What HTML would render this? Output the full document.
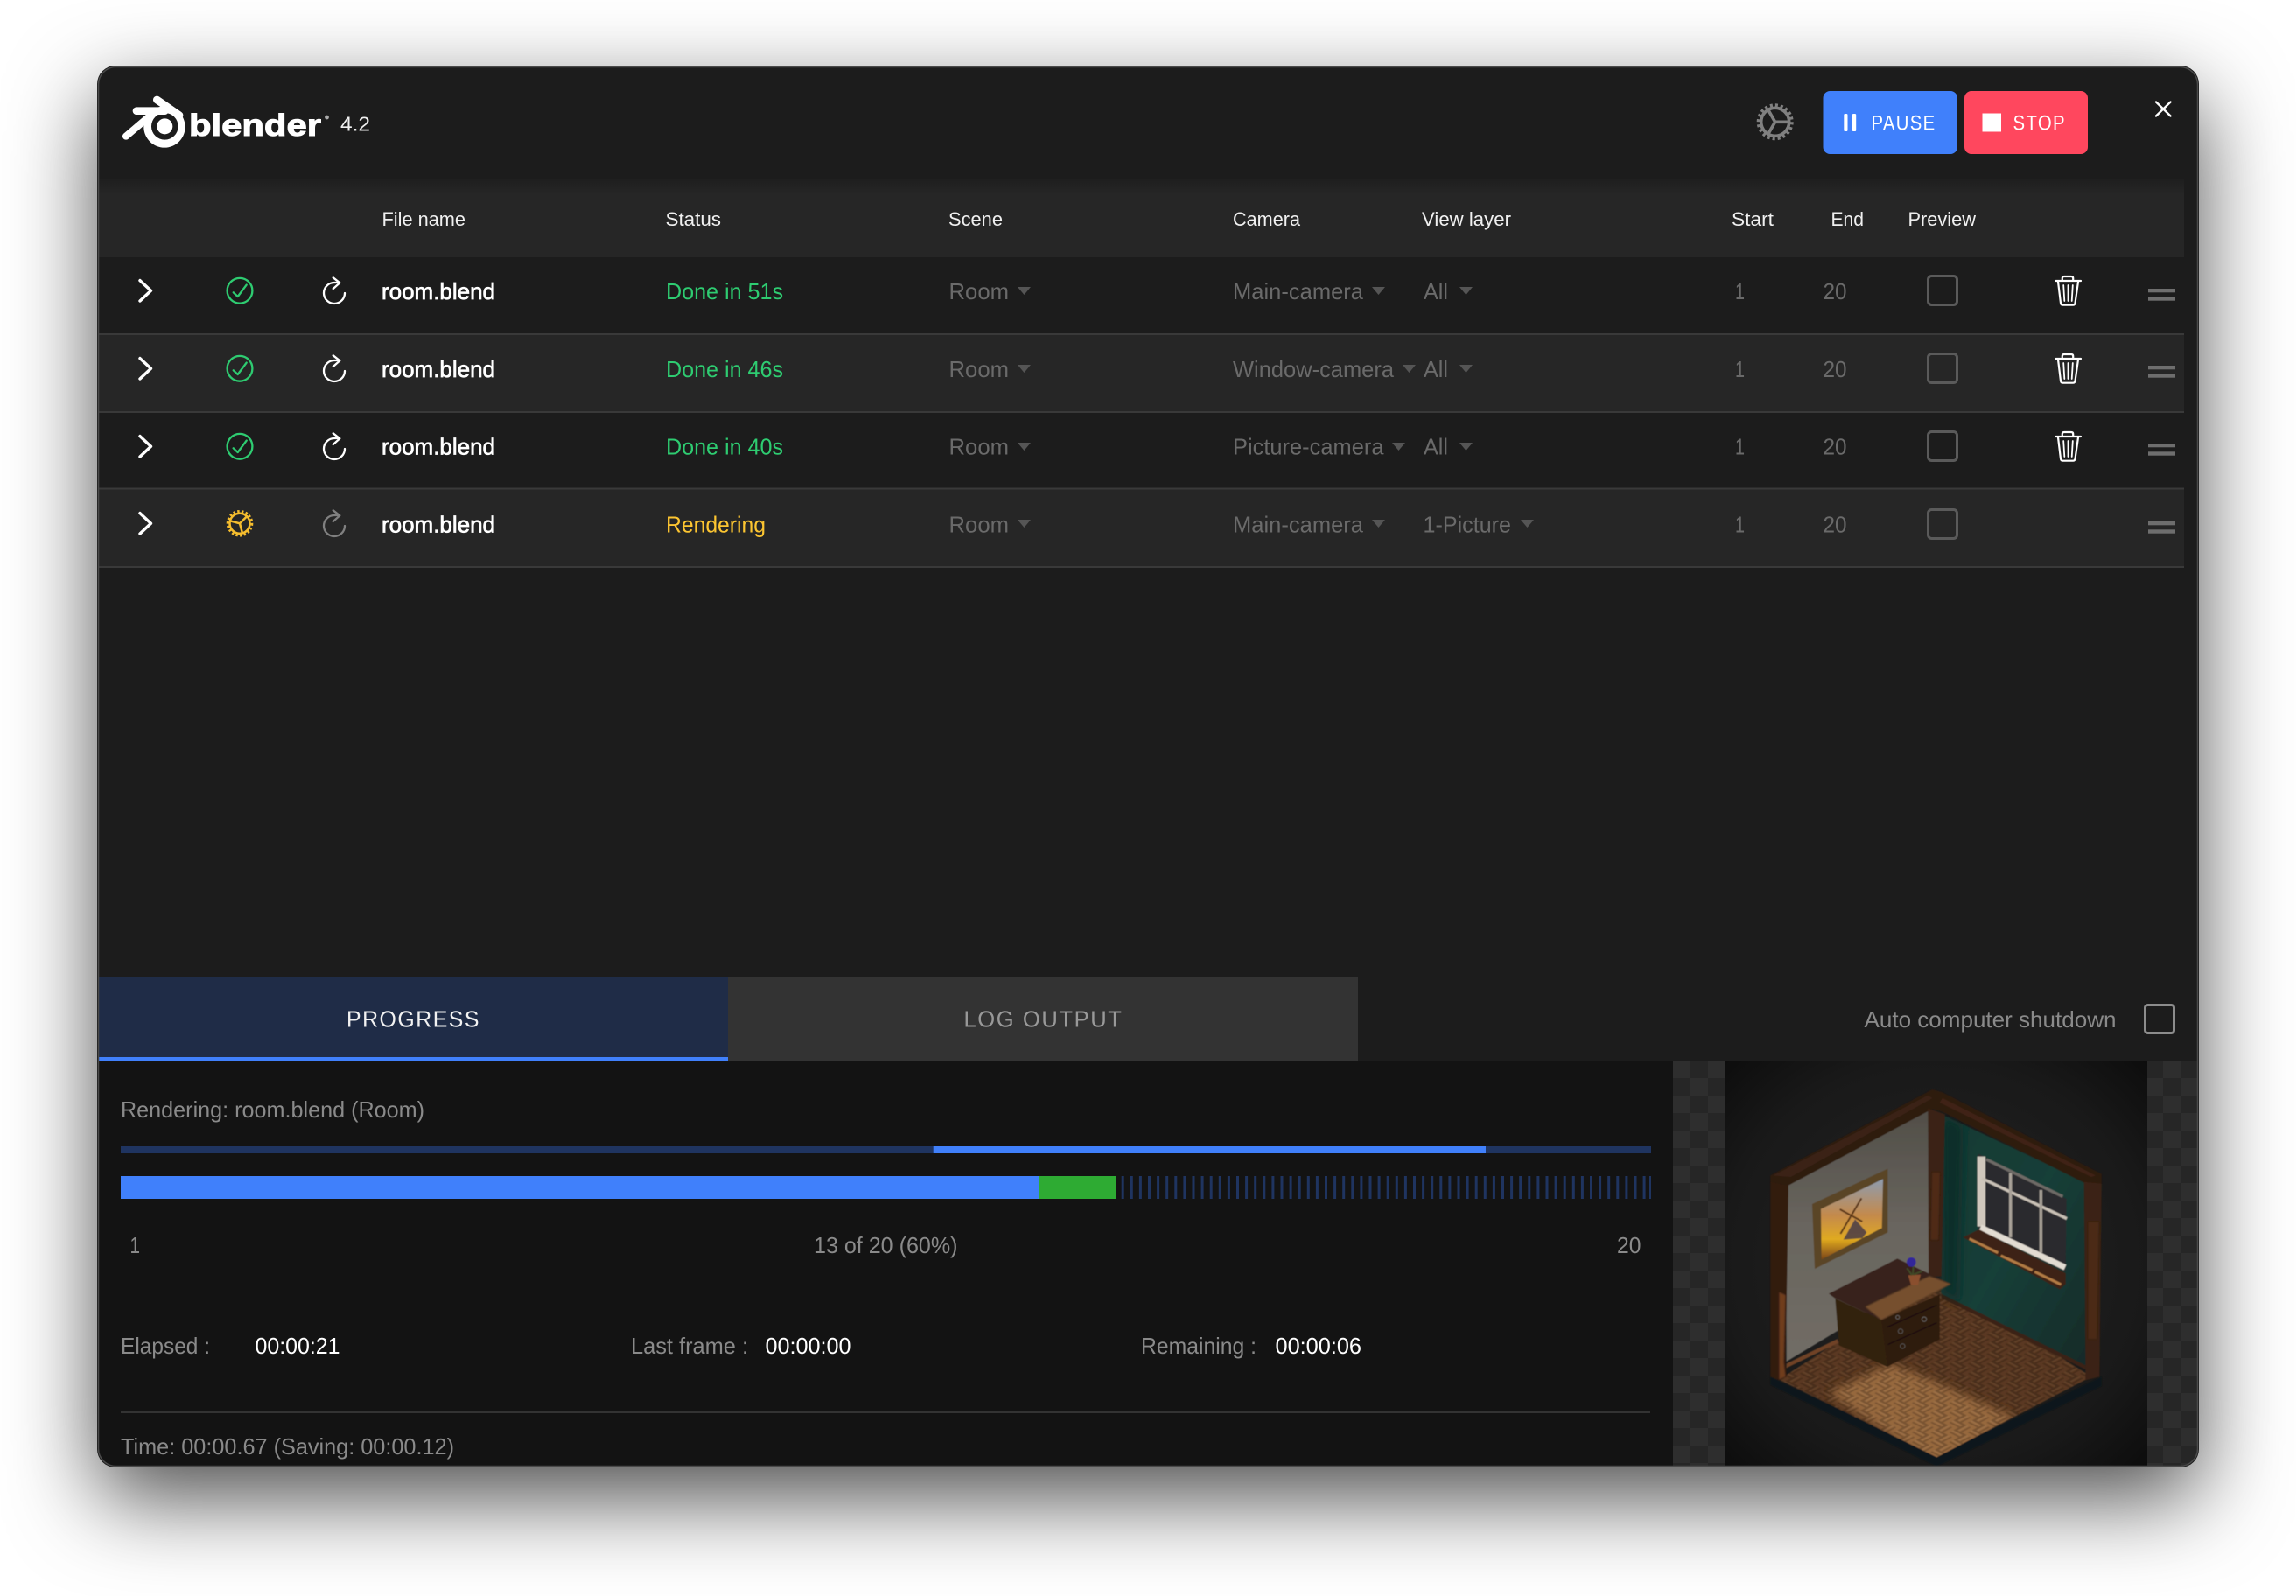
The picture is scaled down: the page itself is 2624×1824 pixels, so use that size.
<!DOCTYPE html>
<html lang="en">
<head>
<meta charset="utf-8">
<title>Blender render queue</title>
<style>
html,body{margin:0;padding:0;background:#fff;width:2624px;height:1824px;overflow:hidden}
#win{position:absolute;left:112px;top:76px;width:2400px;height:1600px;border-radius:20px;background:#1c1c1c;box-shadow:0 0 0 1px #1a1a1a,0 36px 100px rgba(0,0,0,.7)}
svg{position:absolute;left:0;top:0}
text{font-family:"Liberation Sans",sans-serif;font-size:26px}
.h{font-size:22px;fill:#f0f0f0}
.f{fill:#fff;stroke:#fff;stroke-width:.7}
.g{fill:#2ecc71}
.m{fill:#6a6a6a}
.l{fill:#8a8a8a}
.v{fill:#fff}
.s{letter-spacing:1.6px}
</style>
</head>
<body>
<div id="win"></div>
<svg width="2624" height="1824" viewBox="0 0 2624 1824" xmlns="http://www.w3.org/2000/svg">
<defs>
<clipPath id="wc"><rect x="112" y="76" width="2400" height="1600" rx="20"/></clipPath>
<clipPath id="floorclip"><path d="M100 1040 L640 690 L1170 1030 L640 1306 Z"/></clipPath>
<pattern id="chk" x="1912" y="1212" width="40" height="40" patternUnits="userSpaceOnUse">
<rect width="40" height="40" fill="#262626"/>
<rect width="20" height="20" fill="#2e2e2e"/>
<rect x="20" y="20" width="20" height="20" fill="#2e2e2e"/>
</pattern>
<radialGradient id="bgimg" cx=".5" cy=".5" r=".72">
<stop offset="0" stop-color="#242424"/><stop offset=".7" stop-color="#191919"/><stop offset="1" stop-color="#0c0c0c"/>
</radialGradient>
<linearGradient id="hdr" x1="0" y1="0" x2="0" y2="1">
<stop offset="0" stop-color="#1e1e1e"/><stop offset=".2" stop-color="#262626"/><stop offset="1" stop-color="#262626"/>
</linearGradient>
<linearGradient id="lw" x1="0" y1="0" x2="0" y2="1">
<stop offset="0" stop-color="#514e48"/><stop offset=".45" stop-color="#69655e"/><stop offset="1" stop-color="#716d66"/>
</linearGradient>
<linearGradient id="rw" x1="0" y1="0" x2="1" y2="1">
<stop offset="0" stop-color="#123a33"/><stop offset=".5" stop-color="#153f38"/><stop offset="1" stop-color="#122b29"/>
</linearGradient>
<linearGradient id="canvas" x1="0" y1="0" x2="0" y2="1">
<stop offset="0" stop-color="#8e9cb0"/><stop offset=".45" stop-color="#c48a4c"/><stop offset=".75" stop-color="#e0aa20"/><stop offset="1" stop-color="#7a4418"/>
</linearGradient>
<pattern id="parq" width="80" height="80" patternUnits="userSpaceOnUse" patternTransform="matrix(.8 .42 -.8 .42 0 0)">
<g fill="#000" opacity=".2">
<rect x="0" y="0" width="40" height="9"/><rect x="0" y="20" width="40" height="7"/>
<rect x="40" y="0" width="9" height="40"/><rect x="60" y="0" width="7" height="40"/>
<rect x="0" y="40" width="9" height="40"/><rect x="20" y="40" width="7" height="40"/>
<rect x="40" y="40" width="40" height="9"/><rect x="40" y="60" width="40" height="7"/>
</g>
<g fill="#fff" opacity=".05">
<rect x="0" y="10" width="40" height="6"/><rect x="50" y="0" width="6" height="40"/>
<rect x="10" y="40" width="6" height="40"/><rect x="40" y="50" width="40" height="6"/>
</g>
</pattern>
<filter id="soft" x="-20%" y="-20%" width="140%" height="140%"><feGaussianBlur stdDeviation="2"/></filter>
<filter id="vsoft" x="-30%" y="-30%" width="160%" height="160%"><feGaussianBlur stdDeviation="14"/></filter>
<filter id="all" x="-5%" y="-5%" width="110%" height="110%"><feGaussianBlur stdDeviation="1.6"/></filter>

<g id="chev"><path d="M160 -11.7 L172.5 0 L160 11.7" fill="none" stroke="#fff" stroke-width="3.4" stroke-linecap="round" stroke-linejoin="round"/></g>
<g id="ok" fill="none" stroke="#2ecc71" stroke-width="2.3"><circle r="14.4"/><path d="M-7.3 2 L-2.3 6.7 L7.7 -6.7" stroke-linecap="round" stroke-linejoin="round"/></g>
<g id="re" fill="none" stroke-width="2.3" stroke-linecap="round" stroke-linejoin="round"><path d="M4 -12 H0 A12 12 0 1 0 12 0"/><path d="M-1.3 -17.7 L6.3 -11.7 L-1.3 -5"/></g>
<g id="trash" fill="none" stroke="#fff" stroke-width="2.2" stroke-linecap="round" stroke-linejoin="round">
<path d="M2349.5 321 H2378"/>
<path d="M2356.8 320 V318 Q2356.8 316 2359 316 H2367 Q2369.2 316 2369.2 318 V320"/>
<path d="M2352 322 L2355 346.5 Q2355.3 348.7 2357.5 348.7 H2369 Q2371.2 348.7 2371.5 346.5 L2375 322"/>
<path d="M2358.2 326 L2359.3 344 M2363.5 326 V344 M2368.8 326 L2367.7 344" stroke-width="1.8"/>
</g>
</defs>

<g clip-path="url(#wc)">
<rect x="112" y="76" width="2400" height="1600" fill="#1c1c1c"/>

<!-- table -->
<rect x="112" y="204" width="2384" height="90" fill="url(#hdr)"/>
<rect x="112" y="294" width="2384" height="88" fill="#1c1c1c"/>
<rect x="112" y="382" width="2384" height="89" fill="#262626"/>
<rect x="112" y="471" width="2384" height="88" fill="#1c1c1c"/>
<rect x="112" y="559" width="2384" height="89" fill="#262626"/>
<rect x="112" y="381" width="2384" height="2" fill="#393939"/>
<rect x="112" y="470" width="2384" height="2" fill="#393939"/>
<rect x="112" y="557.5" width="2384" height="2" fill="#393939"/>
<rect x="112" y="647" width="2384" height="2" fill="#393939"/>

<!-- logo -->
<g transform="translate(120 90) scale(.3333)">
<circle cx="204" cy="165" r="71" fill="#fff"/>
<circle cx="205" cy="163" r="46" fill="#1c1c1c"/>
<circle cx="205" cy="163" r="27" fill="#fff"/>
<path d="M178 72 L255 125" stroke="#fff" stroke-width="26" stroke-linecap="round"/>
<path d="M108 110 H205" stroke="#fff" stroke-width="26" stroke-linecap="round"/>
<path d="M72 197 L160 122" stroke="#fff" stroke-width="24" stroke-linecap="round"/>
</g>
<text x="216" y="155" style="font-size:35px;font-weight:700;stroke:#fff;stroke-width:1" fill="#fff" textLength="151" lengthAdjust="spacingAndGlyphs">blender</text>
<circle cx="373.5" cy="134" r="2.4" fill="#aaa"/>
<text x="389" y="149.5" style="font-size:23px" fill="#f0f0f0" textLength="34" lengthAdjust="spacingAndGlyphs">4.2</text>

<!-- top right controls -->
<g transform="translate(2028.7 139.3)" fill="none" stroke="#808080">
<circle r="16" stroke-width="3.6"/>
<circle r="19" stroke-width="4" stroke-dasharray="3 2.97"/>
<path d="M0 0 L16 0 M0 0 L-8 13.9 M0 0 L-8 -13.9" stroke-width="3.6"/>
</g>
<rect x="2083.5" y="104" width="153.5" height="72" rx="8" fill="#4080fb"/>
<rect x="2245" y="104" width="141" height="72" rx="8" fill="#ff475e"/>
<rect x="2107.3" y="130" width="4.2" height="20" rx="1.4" fill="#fff"/>
<rect x="2116.8" y="130" width="4.4" height="20" rx="1.4" fill="#fff"/>
<text class="s" x="2138.5" y="148.5" style="font-size:24px" fill="#fff" textLength="74" lengthAdjust="spacingAndGlyphs">PAUSE</text>
<rect x="2265.5" y="129.5" width="21.5" height="21" fill="#fff"/>
<text class="s" x="2300.5" y="148.5" style="font-size:24px" fill="#fff" textLength="60.5" lengthAdjust="spacingAndGlyphs">STOP</text>
<path d="M2464 116.5 L2480.5 132.5 M2480.5 116.5 L2464 132.5" stroke="#fff" stroke-width="2.4" stroke-linecap="round"/>

<!-- headers -->
<text class="h" x="436.5" y="258" textLength="95.5" lengthAdjust="spacingAndGlyphs">File name</text>
<text class="h" x="760.5" y="258" textLength="63.5" lengthAdjust="spacingAndGlyphs">Status</text>
<text class="h" x="1084" y="258" textLength="62" lengthAdjust="spacingAndGlyphs">Scene</text>
<text class="h" x="1409" y="258" textLength="77" lengthAdjust="spacingAndGlyphs">Camera</text>
<text class="h" x="1625" y="258" textLength="102" lengthAdjust="spacingAndGlyphs">View layer</text>
<text class="h" x="1979" y="258" textLength="48" lengthAdjust="spacingAndGlyphs">Start</text>
<text class="h" x="2092.5" y="258" textLength="37.5" lengthAdjust="spacingAndGlyphs">End</text>
<text class="h" x="2180.5" y="258" textLength="77.5" lengthAdjust="spacingAndGlyphs">Preview</text>

<!-- row 1 -->
<use href="#chev" y="332.3"/>
<use href="#ok" x="274" y="332.3"/>
<use href="#re" x="382" y="335" stroke="#fff"/>
<text class="f" x="436" y="342" textLength="130" lengthAdjust="spacingAndGlyphs">room.blend</text>
<text class="g" x="761" y="342" textLength="134" lengthAdjust="spacingAndGlyphs">Done in 51s</text>
<text class="m" x="1084.5" y="342" textLength="68.5" lengthAdjust="spacingAndGlyphs">Room</text>
<path d="M1163 328 h15 l-7.5 9z" fill="#555"/>
<text class="m" x="1409" y="342" textLength="149" lengthAdjust="spacingAndGlyphs">Main-camera</text>
<path d="M1568 328 h15 l-7.5 9z" fill="#555"/>
<text class="m" x="1627" y="342" textLength="28" lengthAdjust="spacingAndGlyphs">All</text>
<path d="M1668 328 h15 l-7.5 9z" fill="#555"/>
<text class="m" x="1983" y="342" textLength="11" lengthAdjust="spacingAndGlyphs">1</text>
<text class="m" x="2083.5" y="342" textLength="27" lengthAdjust="spacingAndGlyphs">20</text>
<rect x="2203.5" y="315.5" width="33" height="33" rx="4" fill="none" stroke="#5a5a5a" stroke-width="3"/>
<use href="#trash"/>
<rect x="2455" y="330" width="31" height="4.3" fill="#6e6e6e"/><rect x="2455" y="339.3" width="31" height="4.4" fill="#6e6e6e"/>

<!-- row 2 -->
<use href="#chev" y="421.3"/>
<use href="#ok" x="274" y="421.3"/>
<use href="#re" x="382" y="424" stroke="#fff"/>
<text class="f" x="436" y="430.8" textLength="130" lengthAdjust="spacingAndGlyphs">room.blend</text>
<text class="g" x="761" y="430.8" textLength="134" lengthAdjust="spacingAndGlyphs">Done in 46s</text>
<text class="m" x="1084.5" y="430.8" textLength="68.5" lengthAdjust="spacingAndGlyphs">Room</text>
<path d="M1163 417 h15 l-7.5 9z" fill="#555"/>
<text class="m" x="1409" y="430.8" textLength="184" lengthAdjust="spacingAndGlyphs">Window-camera</text>
<path d="M1603 417 h15 l-7.5 9z" fill="#555"/>
<text class="m" x="1627" y="430.8" textLength="28" lengthAdjust="spacingAndGlyphs">All</text>
<path d="M1668 417 h15 l-7.5 9z" fill="#555"/>
<text class="m" x="1983" y="430.8" textLength="11" lengthAdjust="spacingAndGlyphs">1</text>
<text class="m" x="2083.5" y="430.8" textLength="27" lengthAdjust="spacingAndGlyphs">20</text>
<rect x="2203.5" y="404.5" width="33" height="33" rx="4" fill="none" stroke="#5a5a5a" stroke-width="3"/>
<use href="#trash" y="89"/>
<rect x="2455" y="418" width="31" height="4.3" fill="#6e6e6e"/><rect x="2455" y="427.3" width="31" height="4.4" fill="#6e6e6e"/>

<!-- row 3 -->
<use href="#chev" y="510.3"/>
<use href="#ok" x="274" y="510.3"/>
<use href="#re" x="382" y="513" stroke="#fff"/>
<text class="f" x="436" y="519.7" textLength="130" lengthAdjust="spacingAndGlyphs">room.blend</text>
<text class="g" x="761" y="519.7" textLength="134" lengthAdjust="spacingAndGlyphs">Done in 40s</text>
<text class="m" x="1084.5" y="519.7" textLength="68.5" lengthAdjust="spacingAndGlyphs">Room</text>
<path d="M1163 506 h15 l-7.5 9z" fill="#555"/>
<text class="m" x="1409" y="519.7" textLength="172.5" lengthAdjust="spacingAndGlyphs">Picture-camera</text>
<path d="M1591 506 h15 l-7.5 9z" fill="#555"/>
<text class="m" x="1627" y="519.7" textLength="28" lengthAdjust="spacingAndGlyphs">All</text>
<path d="M1668 506 h15 l-7.5 9z" fill="#555"/>
<text class="m" x="1983" y="519.7" textLength="11" lengthAdjust="spacingAndGlyphs">1</text>
<text class="m" x="2083.5" y="519.7" textLength="27" lengthAdjust="spacingAndGlyphs">20</text>
<rect x="2203.5" y="493.5" width="33" height="33" rx="4" fill="none" stroke="#5a5a5a" stroke-width="3"/>
<use href="#trash" y="178"/>
<rect x="2455" y="507" width="31" height="4.3" fill="#6e6e6e"/><rect x="2455" y="516.3" width="31" height="4.4" fill="#6e6e6e"/>

<!-- row 4 -->
<use href="#chev" y="598.3"/>
<g transform="translate(274 598.3)" fill="none" stroke="#f5bd2e">
<circle r="11.5" stroke-width="2.5"/>
<circle r="13.8" stroke-width="3" stroke-dasharray="2.4 2.38"/>
<path d="M0 0 L3 11.2 M0 0 L-11.2 -3 M0 0 L8.2 -8.2" stroke-width="2.5"/>
</g>
<use href="#re" x="382" y="601" stroke="#808080"/>
<text class="f" x="436" y="608.5" textLength="130" lengthAdjust="spacingAndGlyphs">room.blend</text>
<text x="761" y="608.5" fill="#fcc531" textLength="114" lengthAdjust="spacingAndGlyphs">Rendering</text>
<text class="m" x="1084.5" y="608.5" textLength="68.5" lengthAdjust="spacingAndGlyphs">Room</text>
<path d="M1163 594 h15 l-7.5 9z" fill="#555"/>
<text class="m" x="1409" y="608.5" textLength="149" lengthAdjust="spacingAndGlyphs">Main-camera</text>
<path d="M1568 594 h15 l-7.5 9z" fill="#555"/>
<text class="m" x="1626.5" y="608.5" textLength="100.5" lengthAdjust="spacingAndGlyphs">1-Picture</text>
<path d="M1738 594 h15 l-7.5 9z" fill="#555"/>
<text class="m" x="1983" y="608.5" textLength="11" lengthAdjust="spacingAndGlyphs">1</text>
<text class="m" x="2083.5" y="608.5" textLength="27" lengthAdjust="spacingAndGlyphs">20</text>
<rect x="2203.5" y="582.5" width="33" height="33" rx="4" fill="none" stroke="#5a5a5a" stroke-width="3"/>
<rect x="2455" y="596" width="31" height="4.3" fill="#6e6e6e"/><rect x="2455" y="605.3" width="31" height="4.4" fill="#6e6e6e"/>

<!-- tabs -->
<rect x="112" y="1116" width="720" height="96" fill="#1f2c47"/>
<rect x="112" y="1208" width="720" height="4" fill="#4080fb"/>
<rect x="832" y="1116" width="720" height="96" fill="#333"/>
<text class="s" x="396" y="1173.5" fill="#f2f2f2" textLength="153" lengthAdjust="spacingAndGlyphs">PROGRESS</text>
<text class="s" x="1101.5" y="1173.5" fill="#999" textLength="182" lengthAdjust="spacingAndGlyphs">LOG OUTPUT</text>
<text class="l" x="2130.5" y="1174" textLength="288" lengthAdjust="spacingAndGlyphs">Auto computer shutdown</text>
<rect x="2451.5" y="1148.5" width="33" height="32" rx="3" fill="none" stroke="#8c8c8c" stroke-width="3"/>

<!-- bottom panel -->
<rect x="112" y="1212" width="2400" height="464" fill="#131313"/>
<text class="l" x="138" y="1277" textLength="347" lengthAdjust="spacingAndGlyphs">Rendering: room.blend (Room)</text>

<rect x="138" y="1310" width="1749" height="8" fill="#1f3460"/>
<rect x="1066.7" y="1310" width="631.3" height="8" fill="#4080fb"/>

<rect x="138" y="1344" width="1049" height="26" fill="#4080fb"/>
<rect x="1187" y="1344" width="88" height="26" fill="#2eab33"/>
<path d="M1283.2 1344 v26 M1293.3 1344 v26 M1303.4 1344 v26 M1313.5 1344 v26 M1323.6 1344 v26 M1333.7 1344 v26 M1343.8 1344 v26 M1353.9 1344 v26 M1364 1344 v26 M1374.1 1344 v26 M1384.2 1344 v26 M1394.3 1344 v26 M1404.4 1344 v26 M1414.5 1344 v26 M1424.6 1344 v26 M1434.7 1344 v26 M1444.8 1344 v26 M1454.9 1344 v26 M1465 1344 v26 M1475.1 1344 v26 M1485.2 1344 v26 M1495.3 1344 v26 M1505.4 1344 v26 M1515.5 1344 v26 M1525.6 1344 v26 M1535.7 1344 v26 M1545.8 1344 v26 M1555.9 1344 v26 M1566 1344 v26 M1576.1 1344 v26 M1586.2 1344 v26 M1596.3 1344 v26 M1606.4 1344 v26 M1616.5 1344 v26 M1626.6 1344 v26 M1636.7 1344 v26 M1646.8 1344 v26 M1656.9 1344 v26 M1667 1344 v26 M1677.1 1344 v26 M1687.2 1344 v26 M1697.3 1344 v26 M1707.4 1344 v26 M1717.5 1344 v26 M1727.6 1344 v26 M1737.7 1344 v26 M1747.8 1344 v26 M1757.9 1344 v26 M1768 1344 v26 M1778.1 1344 v26 M1788.2 1344 v26 M1798.3 1344 v26 M1808.4 1344 v26 M1818.5 1344 v26 M1828.6 1344 v26 M1838.7 1344 v26 M1848.8 1344 v26 M1858.9 1344 v26 M1869 1344 v26 M1879.1 1344 v26" stroke="#1f3460" stroke-width="3"/>
<rect x="1885" y="1344" width="2" height="26" fill="#1f3460"/>

<text class="l" x="148.5" y="1432" textLength="11.5" lengthAdjust="spacingAndGlyphs">1</text>
<text class="l" x="930" y="1432" textLength="164.5" lengthAdjust="spacingAndGlyphs">13 of 20 (60%)</text>
<text class="l" x="1848" y="1432" textLength="27.5" lengthAdjust="spacingAndGlyphs">20</text>

<text class="l" x="138" y="1547" textLength="102" lengthAdjust="spacingAndGlyphs">Elapsed :</text>
<text class="v" x="291.5" y="1547" textLength="97" lengthAdjust="spacingAndGlyphs">00:00:21</text>
<text class="l" x="721" y="1547" textLength="134" lengthAdjust="spacingAndGlyphs">Last frame :</text>
<text class="v" x="874.5" y="1547" textLength="98" lengthAdjust="spacingAndGlyphs">00:00:00</text>
<text class="l" x="1304" y="1547" textLength="132" lengthAdjust="spacingAndGlyphs">Remaining :</text>
<text class="v" x="1457.5" y="1547" textLength="98.5" lengthAdjust="spacingAndGlyphs">00:00:06</text>

<rect x="138" y="1613" width="1748" height="2" fill="#333"/>
<text class="l" x="138" y="1662" textLength="381" lengthAdjust="spacingAndGlyphs">Time: 00:00.67 (Saving: 00:00.12)</text>

<!-- preview -->
<rect x="1912" y="1212" width="600" height="464" fill="url(#chk)"/>
<rect x="1971" y="1212" width="483" height="464" fill="url(#bgimg)"/>
<g transform="translate(2000 1230) scale(.33333)" filter="url(#all)">
<!-- base -->
<path d="M70 1030 L640 1300 L1205 1030 L1205 1062 L640 1338 L70 1058 Z" fill="#10161a"/>
<!-- floor -->
<g clip-path="url(#floorclip)">
<rect x="60" y="680" width="1160" height="640" fill="#5a3820"/>
<path d="M270 1085 L480 985 L620 1040 L910 1170 L640 1340 Z" fill="#96683c" filter="url(#vsoft)"/>
<rect x="60" y="680" width="1160" height="640" fill="url(#parq)"/>
</g>
<path d="M125 985 L300 900 L300 915 L125 1000 Z" fill="#704326"/>
<path d="M660 745 L1150 990 L1150 1005 L655 760 Z" fill="#3a2215"/>
<!-- walls -->
<path d="M125 372 L612 115 L612 685 L125 978 Z" fill="url(#lw)"/>
<path d="M660 132 L1147 362 L1152 992 L655 745 Z" fill="url(#rw)"/>
<path d="M660 132 L730 165 L720 775 L655 745 Z" fill="#0c2320" opacity=".5" filter="url(#vsoft)"/>
<!-- beams -->
<path d="M70 340 L625 45 L660 55 L1205 335 L1205 368 L1145 365 L660 122 L625 112 L130 375 L70 365 Z" fill="#2f1a0f"/>
<path d="M80 340 L610 65 L625 75 L140 345 Z" fill="#40261a" opacity=".7"/>
<path d="M660 75 L1185 340 L1170 345 L650 90 Z" fill="#482a18" opacity=".7"/>
<path d="M610 110 L668 130 L656 685 L612 688 Z" fill="#3a2012"/>
<path d="M625 330 L650 330 L645 560 L620 560 Z" fill="#5a3218" opacity=".7" filter="url(#soft)"/>
<path d="M70 362 L132 375 L122 980 L126 1030 L100 1042 L70 1030 Z" fill="#301a0e"/>
<path d="M100 740 L122 750 L116 980 L122 1030 L100 1040 Z" fill="#7a4520" opacity=".85" filter="url(#soft)"/>
<path d="M1145 362 L1205 368 L1198 1030 L1150 1042 L1150 990 Z" fill="#3a2112"/>
<path d="M1160 500 L1195 500 L1188 900 L1160 900 Z" fill="#52301a" opacity=".7" filter="url(#soft)"/>
<!-- painting -->
<path d="M213 438 L472 317 L472 535 L222 660 Z" fill="#5a4526"/>
<path d="M243 455 L456 352 L452 520 L245 628 Z" fill="url(#canvas)"/>
<path d="M320 560 L360 490 L400 535 L385 555 Z" fill="#3e3448" opacity=".8"/>
<path d="M308 456 L385 498 M310 540 L382 418" stroke="#5a3518" stroke-width="6" fill="none"/>
<!-- window -->
<path d="M782 265 L1085 420 L1082 670 L782 520 Z" fill="#2b2b2e"/>
<path d="M793 275 V515" stroke="#cfc7bc" stroke-width="28"/>
<path d="M810 285 L1072 412" stroke="#6e6a66" stroke-width="10"/>
<path d="M795 350 L1086 488" stroke="#c9c1b6" stroke-width="10"/>
<path d="M790 518 L1080 655" stroke="#e2dcd2" stroke-width="20"/>
<path d="M893 332 V552 M997 390 V605" stroke="#a9a299" stroke-width="10"/>
<!-- sill -->
<path d="M730 552 L785 525 L1082 675 L1082 712 L1062 730 Z" fill="#3c2314"/>
<path d="M752 557 L850 605 M860 615 L968 665 M976 670 L1066 714" stroke="#b27c45" stroke-width="9"/>
<!-- dresser -->
<path d="M292 762 L450 835 L470 996 L305 922 Z" fill="#31200f"/>
<path d="M450 835 L650 748 L650 902 L470 996 Z" fill="#2d1a0e"/>
<path d="M470 860 L640 785 M472 920 L640 845" stroke="#1c0f07" stroke-width="4"/>
<path d="M270 745 L505 625 L688 712 L450 835 L290 760 Z" fill="#38231a"/>
<path d="M395 790 L615 685 L688 712 L450 835 Z" fill="#76502f" filter="url(#soft)"/>
<circle cx="506" cy="826" r="6" fill="none" stroke="#777" stroke-width="2"/><circle cx="597" cy="833" r="8" fill="none" stroke="#777" stroke-width="2"/>
<circle cx="516" cy="874" r="8" fill="none" stroke="#666" stroke-width="2"/><circle cx="523" cy="925" r="8" fill="none" stroke="#666" stroke-width="2"/>
<!-- plant -->
<path d="M542 682 L585 680 L576 716 L552 716 Z" fill="#8a4f2d"/>
<path d="M555 682 L538 658 M560 680 L590 668 M558 680 L560 650" stroke="#3f4a26" stroke-width="6" fill="none"/>
<circle cx="553" cy="637" r="16" fill="#33259a"/>
</g>
</g>
<rect x="112.5" y="76.5" width="2399" height="1599" rx="20" fill="none" stroke="#4a4a4a" stroke-width="1.5"/>
</svg>
</body>
</html>
